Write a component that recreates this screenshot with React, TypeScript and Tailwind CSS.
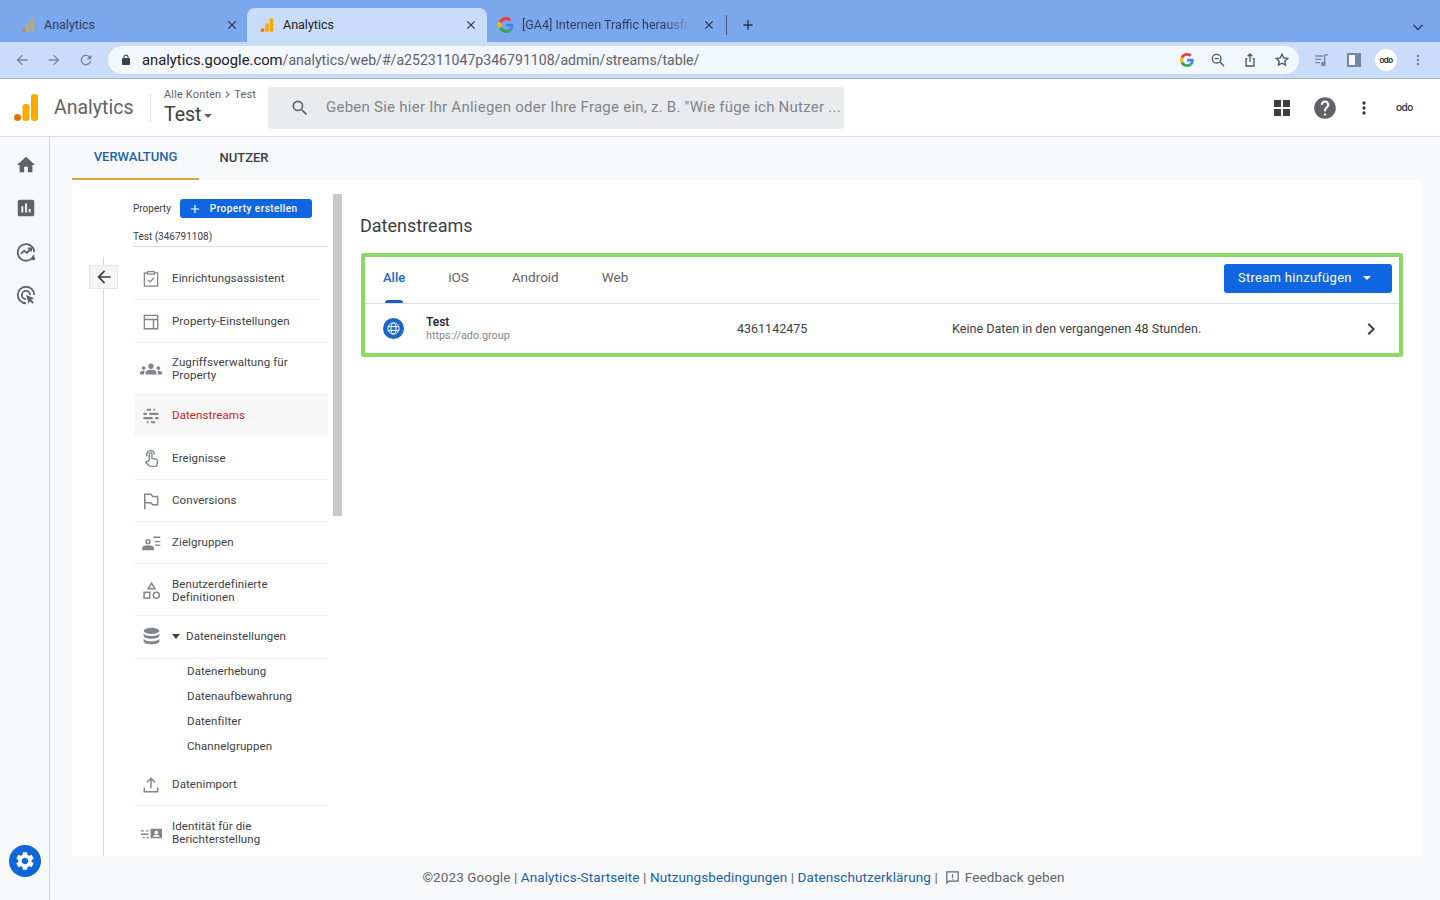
import type { ReactNode } from "react";

const ROBOTO = "font-['Roboto',sans-serif]";

function Icon({ d, size = 24, className = "" }: { d: string; size?: number; className?: string }) {
  return (
    <svg width={size} height={size} viewBox="0 0 24 24" fill="currentColor" className={`shrink-0 ${className}`}>
      <path d={d} />
    </svg>
  );
}

function Line({ size = 24, className = "", children }: { size?: number; className?: string; children: ReactNode }) {
  return (
    <svg width={size} height={size} viewBox="0 0 24 24" fill="none" stroke="currentColor" strokeWidth={2} className={`shrink-0 ${className}`}>
      {children}
    </svg>
  );
}

function AnalyticsLogo({ size, className = "" }: { size: number; className?: string }) {
  return (
    <svg width={size} height={size} viewBox="0 0 24 27" className={`shrink-0 ${className}`}>
      <circle cx="3.5" cy="23.5" r="3.5" fill="#e8710a" />
      <rect x="8.5" y="10" width="7" height="17" rx="3" fill="#f9ab00" />
      <rect x="17" y="0" width="7" height="27" rx="3.2" fill="#f9ab00" />
    </svg>
  );
}

function GoogleG({ size }: { size: number }) {
  return (
    <svg width={size} height={size} viewBox="0 0 48 48" className="shrink-0">
      <path fill="#EA4335" d="M24 9.5c3.5 0 6.7 1.2 9.2 3.6l6.9-6.9C35.9 2.4 30.5 0 24 0 14.6 0 6.5 5.4 2.6 13.2l8 6.2C12.5 13.6 17.8 9.5 24 9.5z" />
      <path fill="#4285F4" d="M46.9 24.5c0-1.6-.1-3.1-.4-4.5H24v9h12.9c-.6 3-2.2 5.5-4.7 7.2l7.7 6c4.500-4.200 7-10.300 7-17.700z" />
      <path fill="#FBBC05" d="M10.500 28.600c-.5-1.400-.8-3-.8-4.600s.3-3.200.8-4.600l-8-6.200C.9 16.500 0 20.100 0 24s.9 7.500 2.600 10.800l7.900-6.200z" />
      <path fill="#34A853" d="M24 48c6.500 0 11.900-2.100 15.900-5.800l-7.700-6c-2.100 1.400-4.900 2.300-8.200 2.300-6.200 0-11.500-4.200-13.400-9.900l-8 6.200C6.500 42.600 14.600 48 24 48z" />
    </svg>
  );
}

function AdoMark({ className = "" }: { className?: string }) {
  return <span className={`font-['Inter',sans-serif] font-semibold leading-none tracking-[-0.5px] ${className}`}>odo</span>;
}

function BrowserTab({ label, active, icon, fade }: { label: string; active?: boolean; icon: ReactNode; fade?: boolean }) {
  return (
    <div className={`flex h-[34px] w-[240px] items-center pl-[13px] pr-[9px] ${active ? "rounded-t-lg bg-[#c9dcf9]" : ""}`}>
      {icon}
      <span className={`${fade ? "ml-[8px]" : "ml-[9px]"} flex-1 whitespace-nowrap text-[12.5px] ${active ? "text-[#202124]" : "text-[#2c3e5c]"}`}>
        {fade ? (
          <span className="inline-block bg-gradient-to-r from-[#2c3e5c] from-85% to-transparent bg-clip-text text-transparent">{label}</span>
        ) : (
          label
        )}
      </span>
      <Icon d="M19 6.41 17.59 5 12 10.590 6.410 5 5 6.410 10.590 12 5 17.590 6.410 19 12 13.410 17.590 19 19 17.590 13.410 12z" size={14} className="text-[#2a3346]" />
    </div>
  );
}

function BrowserChrome() {
  return (
    <div className="shrink-0">
      <div className="flex h-[42px] items-end bg-[#7ba7ec] pl-[7px]">
        <div className="w-[240px] pl-[1px]">
          <BrowserTab label="Analytics" icon={<AnalyticsLogo size={14} className="opacity-50" />} />
        </div>
        <BrowserTab label="Analytics" active icon={<AnalyticsLogo size={14} />} />
        <div className="-ml-[2px]">
          <BrowserTab label="[GA4] Internen Traffic herausfil" fade icon={<GoogleG size={16} />} />
        </div>
        <div className="mb-[7px] ml-[1px] h-[20px] w-px bg-[#41597f]" />
        <div className="mb-[9px] ml-[13px] text-[#24324a]">
          <Icon d="M19 13h-6v6h-2v-6H5v-2h6V5h2v6h6v2z" size={16} />
        </div>
        <div className="flex-1" />
        <div className="mb-[9px] mr-[16px] text-[#24406f]">
          <Line size={12}><path d="M3 8l9 9 9-9" strokeWidth={3} /></Line>
        </div>
      </div>
      <div className="flex h-[37px] items-center border-b border-[#a8b3c4] bg-[#c9dcf9] pl-[14px] pr-[14px]">
        <div className="flex w-[94px] items-center gap-[16px] text-[#74859f]">
          <Icon d="M20 11H7.830l5.590-5.590L12 4l-8 8 8 8 1.410-1.410L7.830 13H20v-2z" size={16} />
          <Icon d="M12 4l-1.410 1.410L16.170 11H4v2h12.170l-5.580 5.590L12 20l8-8z" size={16} />
          <Icon d="M17.650 6.350A7.960 7.960 0 0 0 12 4a8 8 0 1 0 7.730 10h-2.080A6 6 0 1 1 12 6c1.660 0 3.140.69 4.220 1.780L13 11h7V4l-2.350 2.350z" size={16} />
        </div>
        <div className="flex h-[28px] w-[1191px] items-center rounded-full bg-[#f3f7fe] pl-[12px] pr-[9px]">
          <Icon d="M18 8h-1V6a5 5 0 0 0-10 0v2H6a2 2 0 0 0-2 2v10a2 2 0 0 0 2 2h12a2 2 0 0 0 2-2V10a2 2 0 0 0-2-2zM9 6a3 3 0 0 1 6 0v2H9V6z" size={12} className="text-[#3c4043]" />
          <span className={`ml-[10px] flex-1 whitespace-nowrap pt-[1px] text-[14.1px] text-[#5f6368] ${ROBOTO}`}>
            <span className="text-[14.8px] text-[#202124]">analytics.google.com</span>/analytics/web/#/a252311047p346791108/admin/streams/table/
          </span>
          <div className="flex items-center gap-[16px] text-[#4d5767]">
            <GoogleG size={14} />
            <Line size={16}><circle cx="10" cy="10" r="6.500" /><path d="M15 15l6 6M7 10h6" /></Line>
            <Line size={16}><path d="M8 10H6v11h12V10h-2M12 15V3M8.500 6.500L12 3l3.500 3.500" /></Line>
            <Line size={16}><path d="M12 3.500l2.600 5.400 5.900.8-4.300 4.100 1 5.900-5.200-2.800-5.200 2.800 1-5.900L3.500 9.700l5.900-.8z" /></Line>
          </div>
        </div>
        <div className="ml-[15px] flex items-center text-[#74859f]">
          <Line size={16}><path d="M2 6h12M2 11h9M2 16h7M16 17V5l5-1" /><circle cx="14" cy="18" r="2.500" fill="currentColor" /></Line>
          <div className="ml-[17px] flex h-[14px] w-[14px] justify-end border-[2px] border-[#74859f] bg-[#f3f7fe]">
            <div className="w-[4px] bg-[#74859f]" />
          </div>
          <div className="ml-[14px] flex h-[22px] w-[22px] items-center justify-center rounded-full bg-white text-[8px] text-[#202124]">
            <AdoMark />
          </div>
          <div className="ml-[13px] text-[#74859f]">
            <Icon d="M12 8a2 2 0 1 0 0-4 2 2 0 0 0 0 4zm0 2a2 2 0 1 0 0 4 2 2 0 0 0 0-4zm0 6a2 2 0 1 0 0 4 2 2 0 0 0 0-4z" size={16} />
          </div>
        </div>
      </div>
    </div>
  );
}

function AppHeader() {
  return (
    <header className="flex h-[58px] shrink-0 items-center border-b border-[#dadce0] bg-white pl-[14px] pr-[28px]">
      <AnalyticsLogo size={24} className="h-[27px]" />
      <span className={`ml-[16px] w-[79px] whitespace-nowrap text-[19.5px] text-[#5f6368] ${ROBOTO}`}>Analytics</span>
      <div className="ml-[17px] h-[28px] w-px bg-[#e3e4e6]" />
      <div className="ml-[13px] flex w-[104px] flex-col">
        <div className="flex items-center text-[11px] leading-[13px] tracking-[0.15px] text-[#5f6368]">
          Alle Konten
          <Icon d="M8.590 16.590 13.170 12 8.590 7.410 10 6l6 6-6 6z" size={13} />
          Test
        </div>
        <div className="mt-[2px] flex h-[24px] items-center text-[19.5px] leading-[24px] text-[#3c4043]">
          Test
          <span className="ml-[3px] mt-[2px] h-0 w-0 border-x-[4px] border-t-[4px] border-x-transparent border-t-[#5f6368]" />
        </div>
      </div>
      <div className="flex h-[42px] w-[576px] items-center rounded bg-[#e9ebed] pl-[22px]">
        <Icon d="M15.500 14h-.79l-.28-.27A6.470 6.470 0 0 0 16 9.500 6.500 6.500 0 1 0 9.500 16c1.610 0 3.090-.59 4.230-1.570l.27.28v.79l5 4.990L20.490 19l-4.990-5zm-6 0a4.500 4.500 0 1 1 0-9 4.500 4.500 0 0 1 0 9z" size={20} className="text-[#5f6368]" />
        <span className="ml-[16px] whitespace-nowrap text-[15px] tracking-[0.25px] text-[#80868b]">
          Geben Sie hier Ihr Anliegen oder Ihre Frage ein, z. B. "Wie füge ich Nutzer ...
        </span>
      </div>
      <div className="flex-1" />
      <div className="grid h-[16px] w-[16px] grid-cols-2 gap-[2px]">
        <span className="bg-[#3c4043]" />
        <span className="bg-[#3c4043]" />
        <span className="bg-[#3c4043]" />
        <span className="bg-[#3c4043]" />
      </div>
      <Icon d="M12 2C6.480 2 2 6.480 2 12s4.480 10 10 10 10-4.480 10-10S17.520 2 12 2zm1 17h-2v-2h2v2zm2.070-7.750l-.9.92C13.450 12.900 13 13.500 13 15h-2v-.5c0-1.100.45-2.100 1.170-2.830l1.240-1.260c.37-.36.59-.86.59-1.410 0-1.100-.9-2-2-2s-2 .9-2 2H8c0-2.210 1.790-4 4-4s4 1.790 4 4c0 .88-.36 1.680-.93 2.250z" size={26} className="ml-[22px] text-[#5f6368]" />
      <Icon d="M12 8a2 2 0 1 0 0-4 2 2 0 0 0 0 4zm0 2a2 2 0 1 0 0 4 2 2 0 0 0 0-4zm0 6a2 2 0 1 0 0 4 2 2 0 0 0 0-4z" size={20} className="ml-[16px] text-[#3c4043]" />
      <span className="mb-[2px] ml-[22px] flex h-[12px] w-[16px] items-center whitespace-nowrap">
        <AdoMark className="text-[10px] text-[#3c4043]" />
      </span>
    </header>
  );
}

function Rail() {
  return (
    <aside className="flex w-[50px] shrink-0 flex-col items-center border-r border-[#d4d6d9] pl-[3px] pt-[17px] text-[#5f6368]">
      <Icon d="M10 20v-6h4v6h5v-8h3L12 3 2 12h3v8z" size={22} />
      <Icon d="M19 3H5c-1.100 0-2 .9-2 2v14c0 1.100.9 2 2 2h14c1.100 0 2-.9 2-2V5c0-1.100-.9-2-2-2zM9 17H7v-7h2v7zm4 0h-2V7h2v10zm4 0h-2v-4h2v4z" size={22} className="mt-[21px]" />
      <Line size={22} className="mt-[22px]">
        <path d="M20.500 15.500A9 9 0 1 1 21 12" />
        <path d="M6.500 14l3.500-3.500 3 2.500 4-4.500M14 8h3.500v3.500" />
        <circle cx="20" cy="19" r="1" fill="currentColor" />
      </Line>
      <Line size={22} className="mt-[21px]">
        <path d="M12 21a9 9 0 1 1 9-9" />
        <path d="M12 16.500a4.500 4.500 0 1 1 4.500-4.500" />
        <path d="M12 12l9 3.500-3.500 1.500 3 3-1.500 1.500-3-3-1 3.500z" fill="currentColor" stroke="none" />
      </Line>
      <div className="flex-1" />
      <div className="mb-[23px] mr-[2px] flex h-[32px] w-[32px] items-center justify-center rounded-full bg-[#0f66d8] text-white">
        <Icon d="M19.140 12.940c.04-.3.06-.61.06-.94 0-.32-.02-.64-.07-.94l2.030-1.580c.18-.14.23-.41.12-.61l-1.920-3.320c-.12-.22-.37-.29-.59-.22l-2.390.96c-.5-.38-1.030-.7-1.620-.94l-.36-2.540c-.04-.24-.24-.41-.48-.41h-3.840c-.24 0-.43.17-.47.41l-.36 2.540c-.59.24-1.130.57-1.620.94l-2.390-.96c-.22-.08-.47 0-.59.22L2.740 8.870c-.12.21-.08.47.12.61l2.030 1.580c-.05.3-.09.63-.09.94s.02.64.07.94l-2.030 1.580c-.18.14-.23.41-.12.61l1.920 3.320c.12.22.37.29.59.22l2.390-.96c.5.38 1.030.7 1.620.94l.36 2.540c.05.24.24.41.48.41h3.840c.24 0 .44-.17.47-.41l.36-2.540c.59-.24 1.130-.56 1.620-.94l2.390.96c.22.08.47 0 .59-.22l1.920-3.320c.12-.22.07-.47-.12-.61l-2.010-1.580zM12 15.600c-1.980 0-3.600-1.620-3.600-3.600s1.620-3.600 3.600-3.600 3.600 1.620 3.600 3.600-1.620 3.600-3.600 3.600z" size={22} />
      </div>
    </aside>
  );
}

const navItems: { label: ReactNode; h: string; icon: ReactNode; active?: boolean; short?: boolean }[] = [
  {
    label: "Einrichtungsassistent",
    h: "h-[43px]",
    short: true,
    icon: (
      <Line size={20}>
        <path d="M8 4.500H4v16h16v-16h-4M8 3h8v3H8zM8.500 13l2.500 2.500 4.500-5" strokeWidth={1.500} />
      </Line>
    ),
  },
  {
    label: "Property-Einstellungen",
    h: "h-[43px]",
    icon: (
      <Line size={20}>
        <path d="M4 4h16v16H4zM4 9h16M15 9v11" strokeWidth={1.700} />
      </Line>
    ),
  },
  {
    label: <>Zugriffsverwaltung für<br />Property</>,
    h: "h-[52px]",
    icon: <Icon size={22} d="M12 12.750c1.630 0 3.070.39 4.240.9A3 3 0 0 1 18 16.400V18H6v-1.590c0-1.190.68-2.260 1.760-2.740A10.300 10.300 0 0 1 12 12.750zM4 13c1.100 0 2-.9 2-2s-.9-2-2-2-2 .9-2 2 .9 2 2 2zm1.130 1.100C4.760 14.040 4.390 14 4 14c-.99 0-1.930.21-2.780.58A2 2 0 0 0 0 16.430V18h4.500v-1.610c0-.83.23-1.610.63-2.290zM20 13c1.100 0 2-.9 2-2s-.9-2-2-2-2 .9-2 2 .9 2 2 2zm4 3.430a2 2 0 0 0-1.220-1.850A7 7 0 0 0 20 14c-.39 0-.76.04-1.130.1.4.68.63 1.460.63 2.290V18H24v-1.570zM12 6c1.660 0 3 1.340 3 3s-1.340 3-3 3-3-1.340-3-3 1.340-3 3-3z" />,
  },
  {
    label: "Datenstreams",
    h: "h-[42px] pb-[1px]",
    active: true,
    icon: (
      <Line size={20}>
        <path d="M7 4.500h5M15 4.500h2M3 9.500h4M10 9.500h11M3 14.500h11M17 14.500h4M7 19.500h2M12 19.500h5" strokeWidth={2.600} />
      </Line>
    ),
  },
  {
    label: "Ereignisse",
    h: "h-[43px]",
    icon: (
      <Line size={21}>
        <path d="M9.500 13.500V6.800a1.500 1.500 0 0 1 3 0v5l5 1.200c1 .3 1.500 1 1.500 2l-.8 4.500c-.2 1-1 1.500-2 1.500H11c-.8 0-1.300-.3-1.800-.9L5.500 16.500l1-1c.5-.4 1-.4 1.500-.1z" strokeWidth={1.600} />
        <path d="M7 9.500a4.500 4.500 0 1 1 8.500-2" strokeWidth={1.600} />
      </Line>
    ),
  },
  {
    label: "Conversions",
    h: "h-[42px] pb-[1px]",
    icon: (
      <Line size={20}>
        <path d="M4.500 22V4h7.500l2 2.500h6v10h-6l-2-2.500H4.500" strokeWidth={1.800} />
      </Line>
    ),
  },
  {
    label: "Zielgruppen",
    h: "h-[42px] pb-[1px]",
    icon: (
      <svg width={21} height={21} viewBox="0 0 24 24" fill="none" stroke="currentColor" strokeWidth={1.700} className="shrink-0">
        <circle cx="8" cy="11" r="2.200" />
        <path d="M2 20v-1c0-2 3-3 6-3s6 1 6 3v1z" fill="currentColor" />
        <path d="M14 6h8M16 11h6M16 15h6" />
      </svg>
    ),
  },
  {
    label: <>Benutzerdefinierte<br />Definitionen</>,
    h: "h-[52px] pt-[1px]",
    icon: (
      <Line size={21}>
        <path d="M12 3.500l4 6.500H8z" strokeWidth={1.700} />
        <path d="M3.500 14h6.500v6.500H3.500z" strokeWidth={1.700} />
        <circle cx="17.500" cy="17.500" r="3.500" strokeWidth={1.700} />
      </Line>
    ),
  },
];

function NavRow({ item }: { item: (typeof navItems)[number] }) {
  return (
    <div className={`relative flex items-center ${item.h} ${item.active ? "bg-[#f7f7f8]" : ""}`}>
      <div className="flex w-[37px] justify-center pr-[5px] text-[#80868b]">{item.icon}</div>
      <span className={`leading-[13px] ${item.active ? "text-[#c5221f]" : ""}`}>{item.label}</span>
      {!item.active && <div className={`absolute bottom-0 left-0 h-px bg-[#eeeff1] ${item.short ? "w-[185px]" : "w-full"}`} />}
    </div>
  );
}

function PropertyNav() {
  return (
    <div className={`flex w-[288px] shrink-0 ${ROBOTO}`}>
      <div className="w-[256px] shrink-0 text-[11.5px] tracking-[0.1px] text-[#3c4043]">
        <div className="ml-[61px] flex h-[67px] flex-col border-b border-[#dadce0] pt-[19px] text-[10px] tracking-normal">
          <div className="flex items-center">
            Property
            <div className="ml-[9px] flex h-[19px] w-[132px] items-center rounded-[3px] bg-[#0f66e0] pl-[8px] text-[10px] font-medium tracking-[0.45px] text-white">
              <Icon d="M19 13h-6v6h-2v-6H5v-2h6V5h2v6h6v2z" size={14} />
              <span className="ml-[8px]">Property erstellen</span>
            </div>
          </div>
          <div className="mt-[11px]">Test (346791108)</div>
        </div>
        <div className="relative ml-[31px] mt-[10px] border-l border-[#d4d6d9] pl-[31px]">
          <div className="absolute -left-[15px] top-[8px] flex h-[24px] w-[29px] items-center justify-center border border-[#e4e5e7] bg-[#f5f5f6] text-[#3c4043]">
            <Icon d="M20 11H7.830l5.590-5.590L12 4l-8 8 8 8 1.410-1.410L7.830 13H20v-2z" size={20} />
          </div>
          {navItems.map((item, i) => (
            <NavRow key={i} item={item} />
          ))}
          <div className="relative flex h-[43px] items-center pb-[2px]">
            <div className="flex w-[37px] justify-center pr-[5px] text-[#80868b]">
              <svg width={21} height={21} viewBox="0 0 24 24" className="shrink-0">
                <ellipse cx="12" cy="5.500" rx="9" ry="3.500" fill="currentColor" />
                <path d="M3 8v3c0 2 4 3.500 9 3.500s9-1.500 9-3.500V8c0 2-4 3.500-9 3.500S3 10 3 8zM3 14v3.500c0 2 4 3.500 9 3.500s9-1.500 9-3.500V14c0 2-4 3.500-9 3.500S3 16 3 14z" fill="currentColor" />
              </svg>
            </div>
            <span className="h-0 w-0 border-x-[4.500px] border-t-[5px] border-x-transparent border-t-[#3c4043]" />
            <span className="ml-[6px]">Dateneinstellungen</span>
            <div className="absolute bottom-0 left-0 h-px w-full bg-[#eeeff1]" />
          </div>
          {["Datenerhebung", "Datenaufbewahrung", "Datenfilter", "Channelgruppen"].map((s) => (
            <div key={s} className="flex h-[25px] items-center pl-[52px]">{s}</div>
          ))}
          <div className="relative mt-[4px] flex h-[43px] items-center">
            <div className="flex w-[37px] justify-center pr-[5px] text-[#80868b]">
              <Line size={20}>
                <path d="M4 15v5h16v-5M12 16V4.500M7 9l5-5 5 5" strokeWidth={1.800} />
              </Line>
            </div>
            Datenimport
            <div className="absolute bottom-0 left-0 h-px w-full bg-[#eeeff1]" />
          </div>
          <div className="flex h-[52px] items-center pt-[2px]">
            <div className="flex w-[37px] justify-center pr-[5px] text-[#80868b]">
              <svg width={23} height={23} viewBox="0 0 24 24" fill="currentColor" className="shrink-0">
                <path d="M1 8.500h3v1.500H1zM6 8.500h3v1.500H6zM1 12h8v1.500H1zM3 15.500h2V17H3zM7 15.500h2V17H7zM11 7h12v10H11zm6 2a2 2 0 1 0 0 4 2 2 0 0 0 0-4zm-3.500 6.500h7V15c0-1-2-1.500-3.500-1.500s-3.500.5-3.500 1.500z" fillRule="evenodd" />
              </svg>
            </div>
            <span className="leading-[13px]">Identität für die<br />Berichterstellung</span>
          </div>
        </div>
      </div>
      <div className="ml-[5px] mt-[14px] h-[322px] w-[9px] shrink-0 bg-[#c9c9c9]" />
    </div>
  );
}

function StreamsPanel() {
  return (
    <div className={`flex-1 pr-[19px] ${ROBOTO}`}>
      <h1 className="flex h-[73px] items-center pt-[17px] text-[18px] font-normal text-[#3c4043]">Datenstreams</h1>
      <div className="ml-px h-[104px] rounded-[2px] border-[4px] border-[#8bd864]">
        <div className="flex h-[47px] items-stretch border-b border-[#dadce0] pl-[18px] pr-[7px] text-[13.5px] leading-[18px] text-[#5f6368]">
          <div className="flex flex-col items-center justify-between pt-[12px] text-[13px] text-[#1a66c4]">
            <span className="font-medium">Alle</span>
            <span className="h-[3px] w-[18px] rounded-t-sm bg-[#1a5fb4]" />
          </div>
          <span className="ml-[43px] pt-[11px]">iOS</span>
          <span className="ml-[43px] pt-[11px]">Android</span>
          <span className="ml-[43px] pt-[11px]">Web</span>
          <div className="flex-1" />
          <div className="mt-[7px] flex h-[29px] w-[168px] items-center rounded-[3px] bg-[#0f66e0] pb-[1px] pl-[14px] text-[13px] tracking-[0.28px] text-white">
            Stream hinzufügen
            <span className="ml-[11px] h-0 w-0 border-x-[4px] border-t-[4px] border-x-transparent border-t-white" />
          </div>
        </div>
        <div className="flex h-[49px] items-center pl-[18px] text-[12px] text-[#3c4043]">
          <div className="flex h-[21px] w-[21px] items-center justify-center rounded-full bg-[#1a66c8] text-white">
            <Line size={15}>
              <circle cx="12" cy="12" r="9" strokeWidth={1.600} />
              <ellipse cx="12" cy="12" rx="4" ry="9" strokeWidth={1.600} />
              <path d="M3.500 9h17M3.500 15h17" strokeWidth={1.600} />
            </Line>
          </div>
          <div className="ml-[22px] w-[311px]">
            <div className="text-[12px] font-medium leading-[14px] text-[#202124]">Test</div>
            <div className="text-[10.8px] leading-[13px] text-[#80868b]">https://ado.group</div>
          </div>
          <span className="w-[215px] pt-[1px] text-[12.5px]">4361142475</span>
          <span className="pt-[1px] text-[12.6px]">Keine Daten in den vergangenen 48 Stunden.</span>
          <div className="flex-1" />
          <Icon d="M8.590 16.590 13.170 12 8.590 7.410 10 6l6 6-6 6z" size={24} className="mr-[16px] text-[#3c4043]" />
        </div>
      </div>
    </div>
  );
}

function Footer() {
  return (
    <footer className={`flex h-[44px] shrink-0 items-center justify-center pb-[2px] pr-[3px] text-[13.5px] tracking-[0.1px] text-[#5f6368] ${ROBOTO}`}>
      <span>©2023 Google |&nbsp;</span>
      <span className="text-[#1a5fa8]">Analytics-Startseite</span>
      <span>&nbsp;|&nbsp;</span>
      <span className="text-[#1a5fa8]">Nutzungsbedingungen</span>
      <span>&nbsp;|&nbsp;</span>
      <span className="text-[#1a5fa8]">Datenschutzerklärung</span>
      <span>&nbsp;|</span>
      <Line size={17} className="ml-[6px] mr-[4px] text-[#5f6368]">
        <path d="M4 4h16v13H7l-3 3zM12 7.500v5M12 14v1.200" strokeWidth={1.700} />
      </Line>
      <span>Feedback geben</span>
    </footer>
  );
}

export default function App() {
  return (
    <div className={`flex h-screen flex-col overflow-hidden bg-[#f8f9fb] ${ROBOTO}`}>
      <BrowserChrome />
      <AppHeader />
      <div className="flex min-h-0 flex-1">
        <Rail />
        <main className="flex min-w-0 flex-1 flex-col">
          <div className="flex h-[43px] shrink-0 pl-[22px] text-[13px] font-medium">
            <div className="flex w-[127px] items-center justify-center border-b-[2px] border-[#e09f3e] pb-[1px] text-[#1a66b0]">VERWALTUNG</div>
            <div className="flex w-[90px] items-center justify-center pb-[2px] text-[#3c4043]">NUTZER</div>
          </div>
          <div className="ml-[22px] mr-[18px] flex min-h-0 flex-1 overflow-hidden bg-white">
            <PropertyNav />
            <StreamsPanel />
          </div>
          <Footer />
        </main>
      </div>
    </div>
  );
}
